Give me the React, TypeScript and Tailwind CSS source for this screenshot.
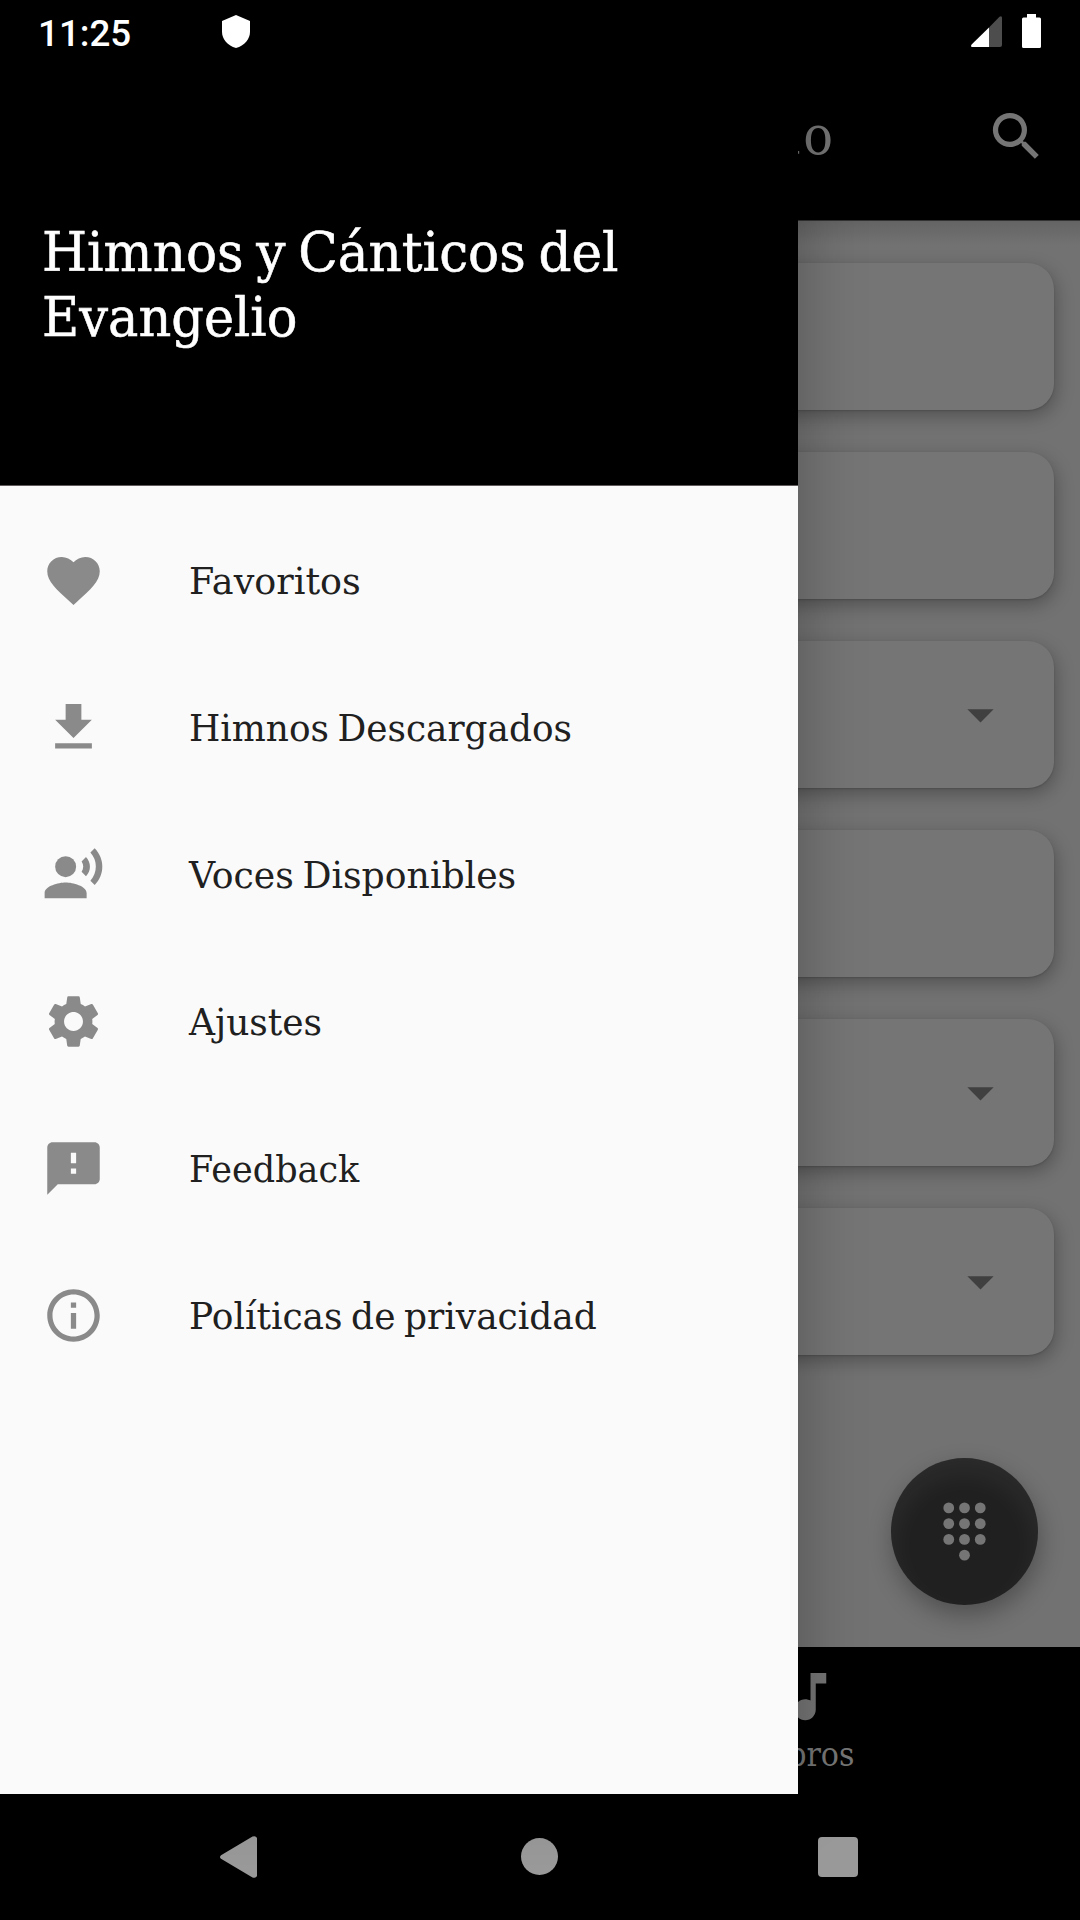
import React from "react";
import {
  MdFavorite,
  MdFileDownload,
  MdRecordVoiceOver,
  MdSettings,
  MdFeedback,
  MdInfoOutline,
  MdSearch,
  MdMusicNote,
  MdArrowDropDown,
} from "react-icons/md";

const serif = "font-['DejaVu_Serif',serif]";
const serifCondensed = "font-['DejaVu_Serif_Condensed','DejaVu_Serif',serif] [font-stretch:condensed]";

const menu = [
  { icon: MdFavorite, label: "Favoritos", fit: "scale-x-[0.974]" },
  { icon: MdFileDownload, label: "Himnos Descargados", fit: "scale-x-[0.957]" },
  { icon: MdRecordVoiceOver, label: "Voces Disponibles", fit: "scale-x-[0.965]" },
  { icon: MdSettings, label: "Ajustes", fit: "scale-x-[0.96]" },
  { icon: MdFeedback, label: "Feedback", fit: "scale-x-[0.933]" },
  { icon: MdInfoOutline, label: "Políticas de privacidad", fit: "scale-x-[0.96]" },
];

const cards = [false, false, true, false, true, true];

function StatusBar() {
  return (
    <div className="absolute inset-x-0 top-0 z-20 flex h-[63px] items-start text-white">
      <span className="ml-[38px] mt-[12px] w-[184px] font-[Roboto] text-[36.75px] font-medium leading-[43px]">
        11:25
      </span>
      <svg className="mt-[15px] h-[33px] w-[28px]" viewBox="0 0 28 33" fill="currentColor">
        <path d="M14 0 28 6v11c0 7-5.5 13.500-14 16C5.500 30.500 0 24 0 17V6Z" />
      </svg>
      <svg className="ml-auto mt-4 h-[31px] w-[31px]" viewBox="0 0 31 31">
        <path d="M31 2v27a2 2 0 0 1-2 2H18V11.500L28.500.800Q31-.500 31 2Z" fill="#4d4d4d" />
        <path d="M18 11.500V31H1Q-.700 30.500.600 28.500Z" fill="#fff" />
      </svg>
      <svg className="ml-5 mr-[39px] mt-[14px] h-[34px] w-[19px]" viewBox="0 0 19 34" fill="currentColor">
        <path d="M5 0h9v3.500h3.500A1.500 1.500 0 0 1 19 5v27.500a1.500 1.500 0 0 1-1.500 1.500h-16A1.500 1.500 0 0 1 0 32.500V5a1.500 1.500 0 0 1 1.500-1.500H5Z" />
      </svg>
    </div>
  );
}

function Drawer() {
  return (
    <aside className="absolute left-0 top-0 z-10 flex h-[1794px] w-[798px] flex-col bg-[#fafafa] shadow-[0_0_62px_rgba(0,0,0,0.28)]">
      <header className="h-[486px] border-b border-[#5f5a5b] bg-black pl-[42px] pt-[220px]">
        <h1
          className={`${serif} flex flex-col items-start whitespace-nowrap text-[55px] leading-[65px] text-white [-webkit-text-stroke:0.6px_white] [word-spacing:-4px]`}
        >
          <span className="origin-left scale-x-[0.94]">Himnos y Cánticos del</span>
          <span className="origin-left scale-x-[0.927]">Evangelio</span>
        </h1>
      </header>
      <nav className="flex flex-col pt-[21px]">
        {menu.map(({ icon: Icon, label, fit }) => (
          <a key={label} className="flex h-[147px] items-center pl-[42px]">
            <Icon className="size-[63px] text-[#8a8a8a]" />
            <span
              className={`${serif} ${fit} ml-[84px] origin-left whitespace-nowrap text-[37.5px] leading-[46px] text-[#202020] [word-spacing:-3px]`}
            >
              {label}
            </span>
          </a>
        ))}
      </nav>
    </aside>
  );
}

function DialButton() {
  return (
    <button className="absolute bottom-[42px] right-[42px] flex size-[147px] items-center justify-center rounded-full bg-[#202020] shadow-[inset_0_14px_30px_rgba(255,255,255,0.06),2px_10px_24px_rgba(0,0,0,0.3)]">
      <svg className="size-[63px] overflow-visible" viewBox="0 0 24 24" fill="#757575">
        {[3, 9, 15].map((y) => [6, 12, 18].map((x) => <circle key={`${x}-${y}`} cx={x} cy={y} r="2.050" />))}
        <circle cx="12" cy="21" r="2.050" />
      </svg>
    </button>
  );
}

export default function App() {
  return (
    <div className="relative flex h-[1920px] w-[1080px] flex-col overflow-hidden bg-black">
      <StatusBar />
      <Drawer />
      <header className="flex h-[221px] shrink-0 items-start border-b border-[#333] bg-black pt-[105px] text-[#757575]">
        <h2
          className={`${serifCondensed} -mt-[2px] w-[836px] whitespace-nowrap text-right text-[55px] leading-[65px] tracking-[3px]`}
        >
          Himnos del Evangelio
        </h2>
        <MdSearch className="ml-auto mr-[32px] size-[63px]" />
      </header>
      <main className="relative flex h-[1426px] shrink-0 flex-col gap-[42px] bg-[#727272] bg-linear-to-b from-[#646464] to-[#727272] to-[24px] px-[26px] pt-[42px]">
        {cards.map((expandable, i) => (
          <div
            key={i}
            className="flex h-[147px] shrink-0 items-center justify-end rounded-[26px] bg-[#757575] pr-[42px] shadow-[2px_6px_18px_rgba(0,0,0,0.28),0_1px_2px_rgba(0,0,0,0.15)]"
          >
            {expandable && <MdArrowDropDown className="size-[63px] text-[#404040]" />}
          </div>
        ))}
        <DialButton />
      </main>
      <footer className="flex h-[147px] shrink-0 bg-black text-[#757575]">
        {["Himnos", "Libros"].map((label) => (
          <div key={label} className="flex flex-1 flex-col items-center pt-[18px]">
            <MdMusicNote className="size-[63px]" />
            <span className={`${serifCondensed} mt-[7px] pr-[8px] text-[33.5px] leading-10`}>{label}</span>
          </div>
        ))}
      </footer>
      <div className="flex h-[126px] shrink-0 items-start bg-black text-[#999]">
        <svg className="ml-[219px] mt-[41px] h-[44px] w-[39px]" viewBox="0 0 39 44" fill="currentColor">
          <path d="M2 20.200 33.500 1.500Q37 .500 38 3v38q-1 2.500-4.500 1.500L2 23.800q-2-1.800 0-3.600Z" />
        </svg>
        <div className="ml-[263px] mt-[44px] size-[37px] rounded-full bg-[#999]" />
        <div className="ml-[260px] mt-[43px] size-[40px] rounded-[4px] bg-[#999]" />
      </div>
    </div>
  );
}
